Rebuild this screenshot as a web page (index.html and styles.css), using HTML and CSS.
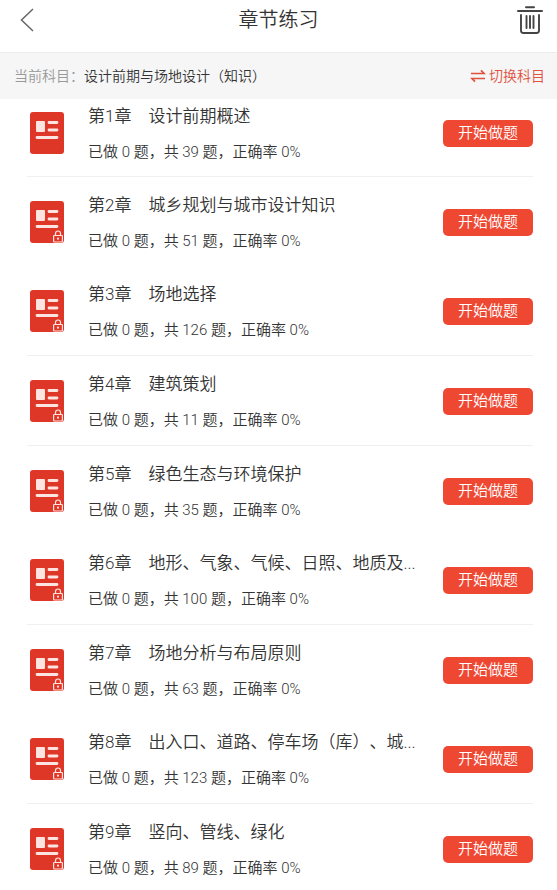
FILE: index.html
```html
<!DOCTYPE html>
<html lang="zh-CN">
<head>
    <meta charset="UTF-8">
    <meta name="viewport" content="width=device-width, initial-scale=1.0">
    <title>章节练习</title>
    <link rel="stylesheet" href="styles.css">
</head>
<body>
    <svg class="symbols" aria-hidden="true">
        <symbol id="book" viewBox="0 0 36 44">
            <rect x="1" y="1" width="34" height="42" rx="3" fill="#df3727"/>
            <rect x="7" y="10" width="9" height="11" rx="1" fill="#fee4e0"/>
            <path d="M20 11.500h8M20 19h8M8 26.500h20" stroke="#fee4e0" stroke-width="2.800" stroke-linecap="round"/>
        </symbol>
        <symbol id="lock" viewBox="0 0 12 13">
            <path d="M3.500 5.500V3.500a2.500 2.500 0 0 1 5 0v2" fill="none" stroke="#fee4e0" stroke-width="1.200"/>
            <rect x="1.600" y="5.500" width="8.800" height="6.500" rx="0.800" fill="#df3727" stroke="#fee4e0" stroke-width="1.200"/>
            <circle cx="6" cy="8.700" r="1.100" fill="#fee4e0"/>
        </symbol>
    </svg>

    <header class="nav-bar">
        <button class="icon-btn" type="button" aria-label="返回">
            <svg width="14" height="24" viewBox="0 0 14 24" fill="none" stroke="#666" stroke-width="1.500">
                <path d="M13 1L1.500 12L13 23"/>
            </svg>
        </button>
        <h1 class="nav-title">章节练习</h1>
        <button class="icon-btn" type="button" aria-label="清空">
            <svg width="26" height="28" viewBox="0 0 26 28" fill="none" stroke="#444" stroke-width="2" stroke-linecap="round">
                <path d="M9 1.200h8M1 5h24" />
                <path d="M4 9v15.500a2.500 2.500 0 0 0 2.500 2.500h13a2.500 2.500 0 0 0 2.500-2.500V9M9.500 10v12M13 10v12M16.500 10v12" stroke-width="1.900"/>
            </svg>
        </button>
    </header>

    <div class="subject-bar">
        <p class="subject"><span class="subject-label">当前科目：</span>设计前期与场地设计（知识）</p>
        <a class="switch" href="#">
            <svg width="16" height="14" viewBox="0 0 16 14" fill="none" stroke="#e0513f" stroke-width="1.700">
                <path d="M1 4.500h13L11 1.300M15 9.500H2L5 12.700"/>
            </svg>
            切换科目
        </a>
    </div>

    <main>
        <ul class="chapters">
            <li class="chapter divided">
                <div class="cover"><svg class="book"><use href="#book"/></svg></div>
                <div class="info">
                    <h2 class="name">第1章　设计前期概述</h2>
                    <p class="stats">已做 0 题，共 39 题，正确率 0%</p>
                </div>
                <button class="start" type="button">开始做题</button>
            </li>
            <li class="chapter">
                <div class="cover"><svg class="book"><use href="#book"/></svg><svg class="lock"><use href="#lock"/></svg></div>
                <div class="info">
                    <h2 class="name">第2章　城乡规划与城市设计知识</h2>
                    <p class="stats">已做 0 题，共 51 题，正确率 0%</p>
                </div>
                <button class="start" type="button">开始做题</button>
            </li>
            <li class="chapter divided">
                <div class="cover"><svg class="book"><use href="#book"/></svg><svg class="lock"><use href="#lock"/></svg></div>
                <div class="info">
                    <h2 class="name">第3章　场地选择</h2>
                    <p class="stats">已做 0 题，共 126 题，正确率 0%</p>
                </div>
                <button class="start" type="button">开始做题</button>
            </li>
            <li class="chapter divided">
                <div class="cover"><svg class="book"><use href="#book"/></svg><svg class="lock"><use href="#lock"/></svg></div>
                <div class="info">
                    <h2 class="name">第4章　建筑策划</h2>
                    <p class="stats">已做 0 题，共 11 题，正确率 0%</p>
                </div>
                <button class="start" type="button">开始做题</button>
            </li>
            <li class="chapter">
                <div class="cover"><svg class="book"><use href="#book"/></svg><svg class="lock"><use href="#lock"/></svg></div>
                <div class="info">
                    <h2 class="name">第5章　绿色生态与环境保护</h2>
                    <p class="stats">已做 0 题，共 35 题，正确率 0%</p>
                </div>
                <button class="start" type="button">开始做题</button>
            </li>
            <li class="chapter divided">
                <div class="cover"><svg class="book"><use href="#book"/></svg><svg class="lock"><use href="#lock"/></svg></div>
                <div class="info">
                    <h2 class="name">第6章　地形、气象、气候、日照、地质及...</h2>
                    <p class="stats">已做 0 题，共 100 题，正确率 0%</p>
                </div>
                <button class="start" type="button">开始做题</button>
            </li>
            <li class="chapter">
                <div class="cover"><svg class="book"><use href="#book"/></svg><svg class="lock"><use href="#lock"/></svg></div>
                <div class="info">
                    <h2 class="name">第7章　场地分析与布局原则</h2>
                    <p class="stats">已做 0 题，共 63 题，正确率 0%</p>
                </div>
                <button class="start" type="button">开始做题</button>
            </li>
            <li class="chapter divided">
                <div class="cover"><svg class="book"><use href="#book"/></svg><svg class="lock"><use href="#lock"/></svg></div>
                <div class="info">
                    <h2 class="name">第8章　出入口、道路、停车场（库）、城...</h2>
                    <p class="stats">已做 0 题，共 123 题，正确率 0%</p>
                </div>
                <button class="start" type="button">开始做题</button>
            </li>
            <li class="chapter">
                <div class="cover"><svg class="book"><use href="#book"/></svg><svg class="lock"><use href="#lock"/></svg></div>
                <div class="info">
                    <h2 class="name">第9章　竖向、管线、绿化</h2>
                    <p class="stats">已做 0 题，共 89 题，正确率 0%</p>
                </div>
                <button class="start" type="button">开始做题</button>
            </li>
        </ul>
    </main>
</body>
</html>
```
FILE: styles.css
```css
* {
    margin: 0;
    padding: 0;
    box-sizing: border-box;
}

body {
    background: #fff;
    color: #333;
    font-family: Roboto, "Noto Sans CJK SC", sans-serif;
    font-weight: 350;
    text-spacing-trim: space-all;
}

button {
    border: none;
    background: none;
    font-family: inherit;
    font-weight: inherit;
    cursor: pointer;
}

svg {
    display: block;
}

.symbols {
    display: none;
}

.nav-bar {
    display: flex;
    align-items: center;
    justify-content: space-between;
    padding: 2px 14px 14px;
}

.icon-btn {
    display: flex;
    width: 26px;
    height: 36px;
    align-items: center;
    justify-content: center;
}

.nav-title {
    font-size: 20px;
    font-weight: inherit;
    line-height: 36px;
}

.subject-bar {
    display: flex;
    align-items: center;
    justify-content: space-between;
    padding: 12px 12px 12px 14px;
    border-top: 1px solid #ececec;
    background: #f6f6f6;
    font-size: 14px;
    line-height: 22px;
}

.subject-label {
    color: #999;
}

.switch {
    display: flex;
    align-items: center;
    gap: 3px;
    color: #e0513f;
    text-decoration: none;
}

.chapters {
    padding: 0 24px 0 27px;
    list-style: none;
}

.chapter {
    display: flex;
    align-items: center;
    padding: 15px 0 14px;
}

/* the first row sits tight under the subject bar */
.chapter:first-child {
    padding: 4px 0 13px;
}

.chapter.divided {
    border-bottom: 1px solid #f0f0f0;
}

.cover {
    position: relative;
    margin: 0 23px 0 2px;
}

.book {
    width: 36px;
    height: 44px;
}

.lock {
    position: absolute;
    right: 1px;
    bottom: 1px;
    width: 12px;
    height: 13px;
}

.info {
    flex: 1;
    min-width: 0;
    padding-right: 16px;
}

.name {
    overflow: hidden;
    font-size: 17px;
    font-weight: inherit;
    line-height: 26px;
    text-overflow: ellipsis;
    white-space: nowrap;
}

.stats {
    margin-top: 12px;
    font-size: 15px;
    line-height: 22px;
}

.start {
    width: 90px;
    height: 27px;
    border-radius: 5px;
    background: #ef4832;
    color: #fff;
    font-size: 15px;
    line-height: 27px;
}
```
